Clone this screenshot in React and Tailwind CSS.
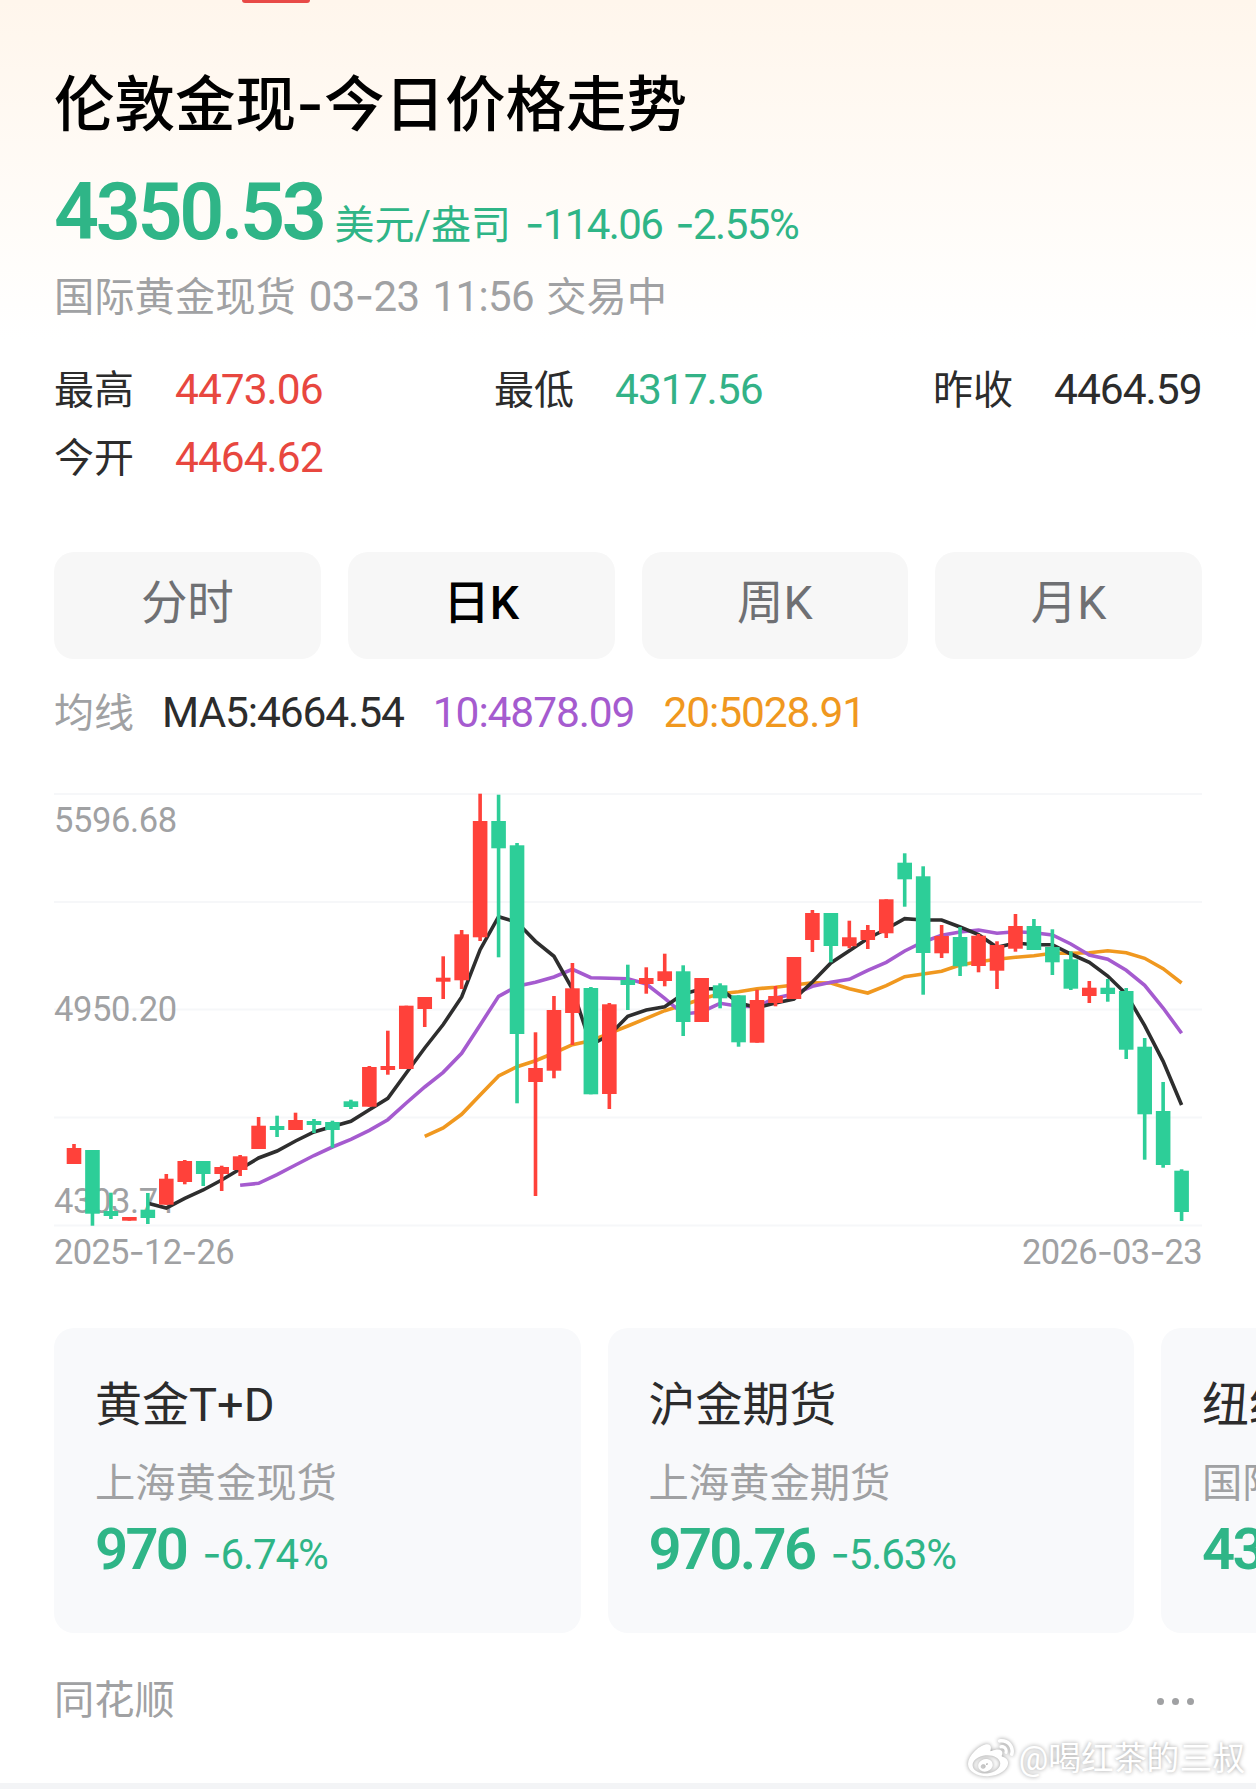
import { FaWeibo } from 'react-icons/fa';

const UP = '#ff413a';
const DOWN = '#2dce98';

// chart area bounds and the distance between two candles
const LEFT = 54;
const TOP = 795;
const WIDTH = 1148;
const HEIGHT = 432;
const FIRST_X = 74;
const STEP = 18.46;

// [body top, body bottom, high, low, rising]
const candles = [
  [1149, 1165, 1145, 1165, 1],
  [1151, 1214.7, 1151, 1226.7, 0],
  [1212, 1217, 1193.7, 1220, 0],
  [1218, 1221.7, 1218, 1221.7, 1],
  [1210.7, 1219, 1194, 1225, 0],
  [1179.7, 1205.7, 1175, 1205.7, 1],
  [1162, 1183, 1161, 1185.3, 1],
  [1162, 1175, 1162, 1187, 0],
  [1168, 1175, 1166.7, 1192, 1],
  [1157.3, 1171, 1156, 1177, 1],
  [1126.7, 1150, 1118, 1150, 1],
  [1127, 1131, 1116.7, 1138, 0],
  [1121, 1131, 1113.7, 1131, 1],
  [1122, 1126, 1120, 1134, 0],
  [1123, 1131, 1121.7, 1148.7, 0],
  [1102.3, 1108, 1100.7, 1110, 0],
  [1068, 1107.7, 1067, 1107.7, 1],
  [1067, 1071, 1031.7, 1075.7, 1],
  [1006.7, 1070, 1006.7, 1070, 1],
  [998, 1010, 998, 1028, 1],
  [978.7, 982.7, 957.3, 1000, 1],
  [935.3, 981.3, 931, 990, 1],
  [822, 938.3, 794.7, 942, 1],
  [822, 849.3, 795.7, 958.3, 0],
  [846.3, 1035, 844, 1104.3, 0],
  [1069, 1083, 1033.3, 1197, 1],
  [1011, 1071.7, 997, 1079.3, 1],
  [989.3, 1014, 964, 1046, 1],
  [989, 1095.3, 988, 1095.3, 0],
  [1005.3, 1095, 1004, 1110, 1],
  [981, 986, 965.7, 1011, 0],
  [979, 985, 968.3, 994.7, 1],
  [972.3, 982, 954.7, 987.3, 1],
  [972.3, 1023, 966.3, 1037, 0],
  [979, 1023, 979, 1023, 1],
  [986.3, 999.3, 984.3, 1009.3, 0],
  [996.3, 1043.3, 996.3, 1047.7, 0],
  [1001, 1043.7, 990.7, 1043.7, 1],
  [997, 1004, 987, 1007.3, 1],
  [958, 1000, 958, 1000, 1],
  [914, 941, 911, 953, 1],
  [914, 947, 914, 963.3, 0],
  [938.3, 947.3, 921.7, 949.3, 1],
  [931, 941, 926, 950, 1],
  [900.3, 934.3, 900.3, 939, 1],
  [863.7, 880.3, 854.3, 907.7, 0],
  [877.3, 954, 867.3, 995.7, 0],
  [937, 954.3, 926, 959, 1],
  [938, 967.3, 928, 977, 0],
  [936.7, 967, 935, 973.3, 1],
  [946, 971.7, 942.3, 990, 1],
  [927, 949.7, 915, 952.7, 1],
  [927, 951, 920, 951, 0],
  [948, 963.3, 930.3, 976, 0],
  [960.3, 989.7, 952.3, 991, 0],
  [988.7, 997, 982, 1004, 1],
  [988.7, 995, 980, 1002.7, 0],
  [992, 1050.7, 989, 1060, 0],
  [1047.7, 1115.3, 1039, 1160.7, 0],
  [1112, 1166, 1083, 1168.7, 0],
  [1171.7, 1213, 1170.3, 1222, 0],
];

const averages = [
  {
    color: '#f0981f',
    start: 19,
    ys: [
      1137.3, 1129, 1115.3, 1096, 1077, 1067.7, 1061.7, 1054, 1045.7, 1041.7, 1034.3, 1027, 1019.3, 1011.7,
      1006, 1000, 994.7, 992.7, 989.7, 988.3, 986, 983.7, 984, 989.7, 994, 986.7, 977.7, 975, 972.3, 966,
      962.7, 960.3, 958.3, 956.7, 954.3, 954.3, 953.7, 951.7, 953.7, 959.3, 969.7, 984,
    ],
  },
  {
    color: '#a55bcf',
    start: 9,
    ys: [
      1186.3, 1184.3, 1175.7, 1166, 1156.5, 1148, 1140.3, 1131.3, 1120.7, 1104, 1088, 1073.3, 1054.3, 1026,
      997.3, 987.3, 983.3, 978, 970.3, 978.7, 979.3, 979.7, 985, 999.3, 1015, 1013, 1004.3, 1007.3, 1007.7,
      999, 995, 987.3, 983.3, 980.3, 971.3, 963.3, 952, 943, 936.3, 933, 931, 934.3, 932.7, 933.7, 936, 945,
      956, 960.3, 971.3, 986.3, 1009, 1034.3,
    ],
  },
  {
    color: '#2e2e2e',
    start: 4,
    ys: [
      1204.3, 1209, 1199.3, 1191, 1181, 1170, 1159, 1152, 1142, 1133, 1127.5, 1122.3, 1110.7, 1099.3, 1074,
      1049, 1025.5, 998, 950.7, 917.7, 923.3, 942.3, 957.3, 990, 1046, 1036, 1017.3, 1011, 1007.7, 995, 990,
      989.5, 1004, 1008.5, 1004, 1000, 983, 964, 951.7, 939.5, 930, 919.7, 921, 921, 928, 935.7, 948.3, 944,
      945.7, 945.7, 955, 963.3, 977, 995, 1026.7, 1062.3, 1106,
    ],
  },
];

const stats = [
  { label: '最高', value: '4473.06', color: 'text-[#e8473f]' },
  { label: '最低', value: '4317.56', color: 'text-[#33b287]' },
  { label: '昨收', value: '4464.59', color: 'text-[#2c2c2c]' },
  { label: '今开', value: '4464.62', color: 'text-[#e8473f]' },
];

const tabs = ['分时', '日K', '周K', '月K'];

const products = [
  { name: '黄金T+D', desc: '上海黄金现货', price: '970', change: '-6.74%' },
  { name: '沪金期货', desc: '上海黄金期货', price: '970.76', change: '-5.63%' },
  { name: '纽约黄金', desc: '国际黄金期货', price: '4352.1', change: '-4.88%' },
];

// Roboto's hyphen is short and low, so the signs and date separators take Inter's
const numberFont = "font-[Inter_Hyphen,Roboto,'Noto_Sans_CJK_SC',sans-serif]";

function Num({ children, className = '' }) {
  return (
    <span className={`whitespace-nowrap ${className}`}>
      {children.split(/(-)/).map((part, i) =>
        part === '-' ? (
          <span key={i} className="font-[Inter]">-</span>
        ) : (
          part
        ),
      )}
    </span>
  );
}

function Chart() {
  return (
    <svg
      className="block h-[432px] w-[1148px] overflow-visible"
      viewBox={`${LEFT} ${TOP} ${WIDTH} ${HEIGHT}`}
    >
      {[795, 903, 1010.5, 1118.5, 1226.5].map((y) => (
        <line key={y} x1={LEFT} x2={LEFT + WIDTH} y1={y} y2={y} stroke="#f6f7f9" strokeWidth="2" />
      ))}
      <g fill="#a0a1a3" fontSize="34.5" letterSpacing="-0.4">
        <text x="54" y="832.5">5596.68</text>
        <text x="54" y="1021.5">4950.20</text>
        <text x="54" y="1213.5">4303.71</text>
      </g>
      {averages.map(({ color, start, ys }) => (
        <polyline
          key={start}
          points={ys.map((y, i) => `${FIRST_X + (start + i) * STEP},${y}`).join(' ')}
          fill="none"
          stroke={color}
          strokeWidth="3.6"
        />
      ))}
      {candles.map(([top, bottom, high, low, up], i) => {
        const x = FIRST_X + i * STEP;
        return (
          <g key={i} fill={up ? UP : DOWN}>
            <rect x={x - 1.8} y={high} width="3.6" height={low - high} />
            <rect x={x - 7.3} y={top} width="14.6" height={bottom - top} />
          </g>
        );
      })}
    </svg>
  );
}

function ProductCard({ name, desc, price, change }) {
  return (
    <div className="h-[305px] w-[526.5px] shrink-0 rounded-[20px] bg-[#f8f9fb] pt-[46px] pl-[41px]">
      <div className="h-[62px] text-[47px] leading-[62px] whitespace-nowrap text-[#2c2c2c]">{name}</div>
      <div className="mt-[21px] h-[54px] text-[40.3px] leading-[54px] whitespace-nowrap text-[#a0a1a3]">{desc}</div>
      <div className="mt-[6px] flex h-[64px] items-baseline leading-[64px] text-[#2fb587]">
        <Num className="text-[58px] font-semibold tracking-[-2.7px]">{price}</Num>
        <Num className="ml-[16px] text-[42px] tracking-[-1.1px]">{change}</Num>
      </div>
    </div>
  );
}

export default function App() {
  return (
    <div className="relative h-[1789px] w-[1256px] overflow-hidden bg-white font-[Roboto,'Noto_Sans_CJK_SC',sans-serif]">
      <div className="flex h-[1783px] flex-col bg-linear-to-b from-[#fff6ec] to-white to-[340px] px-[54px]">
        <div className="ml-[188px] h-[3px] w-[68px] rounded-b-[3px] bg-[#e84a47]" />

        <h1 className="mt-[56px] h-[90px] text-[60.5px] leading-[90px] font-medium text-black">
          <Num>伦敦金现-今日价格走势</Num>
        </h1>

        <div className="mt-[18px] flex h-[90px] items-baseline leading-[90px] whitespace-nowrap text-[#2fb587]">
          <Num className="text-[79px] font-semibold tracking-[-3.4px]">4350.53</Num>
          <span className="ml-[11px] text-[40px]">美元/盎司</span>
          <Num className="ml-[14px] text-[42px] tracking-[-1.6px]">-114.06</Num>
          <Num className="ml-[13px] text-[42px] tracking-[-1.5px]">-2.55%</Num>
        </div>

        <div className="mt-[9px] flex h-[60px] items-baseline text-[40.3px] leading-[60px] whitespace-nowrap text-[#a0a1a3]">
          <span>国际黄金现货</span>
          <Num className="ml-[13px] text-[42px] tracking-[-0.6px]">03-23</Num>
          <Num className="ml-[13px] text-[42px] tracking-[-0.6px]">11:56</Num>
          <span className="ml-[12px]">交易中</span>
        </div>

        <div className="mt-[30px] grid grid-cols-[440px_439px_269px]">
          {stats.map(({ label, value, color }) => (
            <div
              key={label}
              className="flex h-[68px] items-baseline text-[40px] leading-[68px] whitespace-nowrap text-[#2c2c2c]"
            >
              <span>{label}</span>
              <Num className={`ml-[41px] text-[42.5px] tracking-[-1px] ${color}`}>{value}</Num>
            </div>
          ))}
        </div>

        <div className="mt-[60px] grid h-[107px] grid-cols-4 gap-[27px] text-[46.5px]">
          {tabs.map((tab) => (
            <button
              key={tab}
              className={`rounded-[20px] bg-[#f7f7f7] pb-[4px] ${
                tab === '日K' ? 'font-medium text-black' : 'text-[#6f7073]'
              }`}
            >
              {tab}
            </button>
          ))}
        </div>

        <div className="mt-[24px] flex h-[60px] items-baseline text-[42.5px] leading-[60px] tracking-[-1.1px] whitespace-nowrap">
          <span className="text-[40px] tracking-normal text-[#a0a1a3]">均线</span>
          <span className="ml-[28px] text-[#2c2c2c]">MA5:4664.54</span>
          <span className="ml-[29px] text-[#a55bcf]">10:4878.09</span>
          <span className="ml-[29px] text-[#f0981f]">20:5028.91</span>
        </div>

        <div className="mt-[51px]">
          <Chart />
          <div className="flex h-[54px] justify-between text-[34.5px] leading-[52px] tracking-[-0.7px] text-[#a0a1a3]">
            <Num>2025-12-26</Num>
            <Num>2026-03-23</Num>
          </div>
        </div>

        <div className="mt-[48px] flex gap-[27px]">
          {products.map((product) => (
            <ProductCard key={product.name} {...product} />
          ))}
        </div>

        <div className="mt-[38px] flex h-[60px] items-center justify-between pr-[8px] text-[40.3px] text-[#a0a1a3]">
          <span>同花顺</span>
          <div className="flex gap-[8px]">
            <i className="size-[7px] rounded-full bg-[#a0a1a3]" />
            <i className="size-[7px] rounded-full bg-[#a0a1a3]" />
            <i className="size-[7px] rounded-full bg-[#a0a1a3]" />
          </div>
        </div>
      </div>
      <div className="h-[6px] bg-[#f3f4f6]" />

      {/* author mark over the bottom corner */}
      <div className="absolute right-[11px] bottom-[7px] flex items-center gap-[5px] text-white">
        <FaWeibo className="size-[46px] drop-shadow-[0_0_2px_rgba(0,0,0,0.4)]" />
        <span className="text-[32.8px] leading-[44px] whitespace-nowrap [text-shadow:0_0_4px_rgba(0,0,0,0.4)]">
          @喝红茶的三叔
        </span>
      </div>
    </div>
  );
}
